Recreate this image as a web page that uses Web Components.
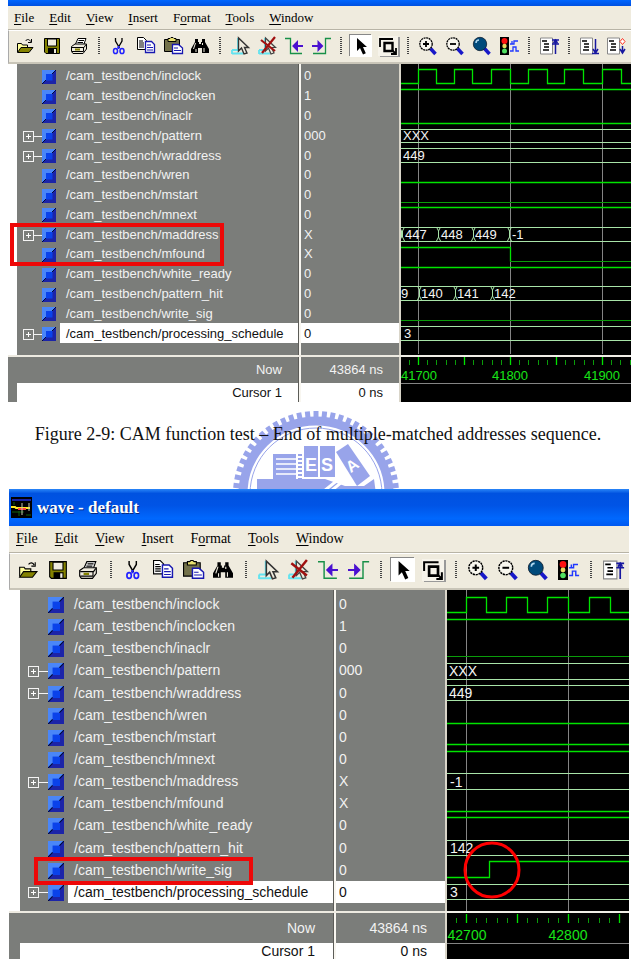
<!DOCTYPE html>
<html lang="en">
<head>
<meta charset="utf-8">
<title>CAM function test</title>
<style>
  body { margin: 0; background: #fff; font-family: "Liberation Sans", Arial, sans-serif; }
</style>
</head>
<body>
<cam-page></cam-page>
<script>
const ICONS = {
  open: '<path d="M1.5 15V6.500h4l1 1.500h5v3" fill="#ffff9c" stroke="#000"/><path d="M1.500 15.500 5 10.500h12l-4 5z" fill="#848200" stroke="#000"/><path d="M9.500 4c1.500-2 4-2 5 .5M15.500 2v3.500H12" fill="none" stroke="#000"/>',
  save: '<path d="M1.500 1.500h15v15H3l-1.500-1.500z" fill="#848200" stroke="#000"/><path d="M4.500 2h9v7h-9z" fill="#efebde" stroke="#000"/><path d="M5 11h9v6H5z"/><path d="M11 12h2v4h-2z" fill="#efebde"/>',
  print: '<path d="M5.500 7 8 1.500h8L14 7" fill="#fff" stroke="#000"/><path d="M8.500 3.500H14M7.500 5.500H13" stroke="#000"/><path d="M1.500 9.500 5 7h11.500v5L13 16.500H3l-1.500-2z" fill="#efebde" stroke="#000"/><path d="M2 10.500h12l2-3M2 14.500h11.500V11" fill="none" stroke="#000"/><path d="M5 12.500h5" stroke="#848200" stroke-width="2"/>',
  cut: '<path d="M5.500 1v3l4 7M12 1v3L8 11" fill="none" stroke="#000" stroke-width="1.300"/><path d="M8.500 9v3" stroke="#2020ff" stroke-width="2"/><g fill="none" stroke="#2020ff" stroke-width="1.500"><ellipse cx="5.500" cy="14" rx="2" ry="2.600"/><ellipse cx="12" cy="14" rx="2" ry="2.600"/></g>',
  copy: '<path d="M.5.5h6l3 3v9h-9z" fill="#fff" stroke="#000"/><path d="M2 4h4M2 6h5M2 8h5M2 10h5" stroke="#000"/><path d="M8.500 4.500h6l3 3v8h-9z" fill="#fff" stroke="#1818b0" stroke-width="1.300"/><path d="M10 8h4M10 10.500h6M10 13h6" stroke="#1818b0"/>',
  paste: '<path d="M.5 2.500h15v12H.5z" fill="#73714a" stroke="#000"/><path d="M4 1.500h2l1-1h2l1 1h2v3H4z" fill="#e8e070" stroke="#000"/><path d="M8.500 7.500h6l4 3.500v5.500h-10z" fill="#fff" stroke="#1818b0" stroke-width="1.300"/><path d="M10 11h4M10 13.500h7" stroke="#1818b0"/>',
  find: '<path d="M4 2h3v3h1v2h2V5h1V2h3v3l4 7v4h-7v-5H7v5H0v-4l4-7z"/><path d="M4.500 6 2.500 12M11.500 6v2M5 12v3M13 11v4" stroke="#efebde"/>',
  cursor: '<path d="M7 1v13M1 13h7M1 16.500h11M1 13v4" stroke="#63e3ef" stroke-width="1.800" fill="none"/><path d="M7.500 1v13l3-3 2.500 6 3-1-2.500-5.500h4z" fill="#efebde" stroke="#333" stroke-width="1.400"/>',
  uncursor: '<path d="M7 1v13M1 13h7M1 16.500h11M1 13v4" stroke="#63e3ef" stroke-width="1.800" fill="none"/><path d="M7.500 1v13l3-3 2.500 6 3-1-2.500-5.500h4z" fill="#efebde" stroke="#444" stroke-width="1.200"/><path d="M3 3 17 14M17 0 4 16" stroke="#a01010" stroke-width="2.200"/>',
  prevedge: '<path d="M0 1.500h5.500v15H17" fill="none" stroke="#189048" stroke-width="1.300"/><path d="M8 9h10M12 5.500 8.500 9l3.500 3.500z" fill="#4a10d0" stroke="#4a10d0" stroke-width="2"/>',
  nextedge: '<path d="M1 16.500h12.500v-15H19" fill="none" stroke="#189048" stroke-width="1.300"/><path d="M0 9h10M6.500 5.500 10 9l-3.500 3.500z" fill="#4a10d0" stroke="#4a10d0" stroke-width="2"/>',
  select: '<path d="M5 1v13l3-3 3 6.500 2.800-1.300L11 10h4z"/>',
  zoombox: '<path d="M1 10V2h13" fill="none" stroke="#000" stroke-width="1.800"/><path d="M5.500 6h8v8h-8z" fill="none" stroke="#000" stroke-width="2.400"/><path d="m13 13 4 4M17 11v6h-5" fill="none" stroke="#000" stroke-width="1.800"/>',
  zoomin: '<path d="m11 11 5.500 6" stroke="#1818c8" stroke-width="3.500"/><circle cx="7" cy="7" r="6.200" fill="#f8f6ee" stroke="#000" stroke-width="1.300" stroke-dasharray="2 .6"/><path d="M4 7h6M7 4v6" stroke="#000" stroke-width="1.800"/>',
  zoomout: '<path d="m11 11 5.500 6" stroke="#1818c8" stroke-width="3.500"/><circle cx="7" cy="7" r="6.200" fill="#f8f6ee" stroke="#000" stroke-width="1.300" stroke-dasharray="2 .6"/><path d="M4 7h6" stroke="#000" stroke-width="1.800"/>',
  zoomfull: '<path d="m11 11 5.500 6" stroke="#1818c8" stroke-width="3.500"/><circle cx="7" cy="7" r="6.700" fill="#004a7b" stroke="#102030" stroke-width=".8"/><path d="M3 6c0-2 1-3 3-3" stroke="#b0d8f0" stroke-width="1.500" fill="none"/>',
  traffic: '<path d="M0 0h9v18H0z"/><circle cx="4.500" cy="4" r="3" fill="#ff1010"/><circle cx="4.500" cy="9" r="2.200" fill="#e8d860"/><circle cx="4.500" cy="14" r="2.500" fill="#50e060"/><path d="M10 7h2V4h0M12 7h2V4h2M10 14h3v-4h3v4h3M14 7V4h4" fill="none" stroke="#2038ff" stroke-width="1.300"/>',
  docup: '<path d="M.5 1h12v16H.5z" fill="#fff" stroke="#888"/><path d="M2 4h5M4 7h5M4 10h5M3 13h6" stroke="#000" stroke-width="1.500"/><path d="M15.500 2v15M12 3h7M12 7h7M13.500 6l2-3 2 3" stroke="#1818a0" stroke-width="1.500" fill="none"/>',
  docdown: '<path d="M.5 1h12v16H.5z" fill="#fff" stroke="#888"/><path d="M2 4h5M4 7h5M4 10h5M3 13h6" stroke="#000" stroke-width="1.500"/><path d="M15.500 2v14M12 16.500h7M13 12l2.500 4 2.500-4" stroke="#1818a0" stroke-width="1.500" fill="none"/>',
  docmark: '<path d="M.5 1h12v16H.5z" fill="#fff" stroke="#888"/><path d="M2 4h5M4 7h5M4 10h5M3 13h6" stroke="#000" stroke-width="1.500"/><path d="M15.500 9v7M13 12l2.500 4 2.500-4" stroke="#1818a0" stroke-width="1.500" fill="none"/><path d="m15.500 1.500 2.500 3-2.500 3-2.500-3z" fill="#fff" stroke="#ff3020"/>'
};
const TOOLS = ['open','save','print','|','cut','copy','paste','find','|','cursor','uncursor','prevedge','nextedge','|','select','zoombox','|','zoomin','zoomout','zoomfull','traffic','|','docup','|','docdown','docmark'];
const SIGNALS = [['inclock','0'],['inclocken','1'],['inaclr','0'],['pattern','000',1],['wraddress','0',1],['wren','0'],['mstart','0'],['mnext','0'],['maddress','X',1],['mfound','X'],['white_ready','0'],['pattern_hit','0'],['write_sig','0'],['processing_schedule','0',1]];

class CamElement extends HTMLElement {
  constructor() { super(); this.attachShadow({ mode: 'open' }); }
  connectedCallback() { this.shadowRoot.innerHTML = this.render(); }
}

customElements.define('tool-icon', class extends CamElement {
  render() {
    return `<style>
      :host { display: block; width: var(--icon); height: var(--icon); }
      svg { display: block; width: 100%; height: 100%; overflow: visible; }
    </style><svg viewBox="0 0 18 18" aria-hidden="true">${ICONS[this.getAttribute('name')]}</svg>`;
  }
});

customElements.define('title-bar', class extends CamElement {
  render() {
    return `<style>
      :host { display: flex; align-items: center; gap: 5px; height: var(--title-h); padding-left: 2px; box-sizing: border-box;
        overflow: hidden; color: #fff; font: bold 17px "Liberation Serif", serif; text-shadow: 1px 1px #0a2a80;
        background: linear-gradient(#2a86f8 0, #0052e0 12%, #0054e6 45%, #0068fe 80%, #0058f0); }
      :host([plain]) { background: linear-gradient(#0066ff, #0050e0); }
      svg { flex: none; width: 21px; height: 21px; }
    </style>${this.hasAttribute('plain') ? '' : `<svg viewBox="0 0 21 21" aria-hidden="true"><path d="M0 0h21v21H0z"/><path d="M1 3h19" stroke="#1820a0" stroke-width="2"/><path d="M1 15h12M15 18h5M3 5v3M8 14v5" stroke="#106010"/><path d="M0 10h4l1 1h14" stroke="#ffe820" stroke-width="2" fill="none"/><path d="M7 12h8" stroke="#ff4040" stroke-width="2"/><path d="M11 6v12M18 6v8" stroke="#c8c8b0"/></svg>`}<slot></slot>`;
  }
});

customElements.define('menu-bar', class extends CamElement {
  render() {
    const items = [['','F','ile'],['','E','dit'],['','V','iew'],['','I','nsert'],['F','o','rmat'],['','T','ools'],['','W','indow']];
    return `<style>
      :host { display: flex; align-items: center; gap: var(--menu-gap); height: var(--menu-h); box-sizing: border-box; padding-left: var(--menu-pad);
        background: #efebde; border-bottom: 1px solid #b8b4a6; }
      button { all: unset; font: var(--menu-font) "Liberation Serif", serif; color: #000; }
      u { text-underline-offset: 2px; }
    </style>${items.map(([a, k, b]) => `<button type="button">${a}<u>${k}</u>${b}</button>`).join('')}`;
  }
});

customElements.define('tool-bar', class extends CamElement {
  render() {
    const list = TOOLS.slice(0, +this.getAttribute('count'));
    return `<style>
      :host { display: flex; align-items: center; height: var(--tool-h); box-sizing: border-box; padding: 0 0 2px var(--tool-pad);
        background: #efebde; border-top: 1px solid #fff; border-bottom: 2px solid #c9c5b8; border-left: 1px solid #aaa; overflow: hidden; }
      button { all: unset; flex: none; display: grid; place-items: center; width: var(--slot); height: 24px; }
      button.select tool-icon { background: #fff; box-shadow: 0 0 0 2px #fff, -1px -1px 0 2px #888; }
      button.zoombox tool-icon { background: #f6f3ea; box-shadow: 0 0 0 1px #f6f3ea, 2px 1px 0 1px #999; }
      i { flex: none; width: var(--sep); height: 18px; background: repeating-linear-gradient(#444 0 1px, transparent 1px 2px) center / 2px 100% no-repeat; }
    </style>${list.map(n => n === '|' ? '<i></i>' : `<button type="button" class="${n}" aria-label="${n}"><tool-icon name="${n}"></tool-icon></button>`).join('')}`;
  }
});

customElements.define('signal-table', class extends CamElement {
  render() {
    const rows = SIGNALS.map(([n, v, bus], i) => `<tr class="${i === 13 ? 'sel' : ''}"><td class="name">${bus ? `<button type="button" aria-label="Expand ${n}"></button><b></b>` : ''}<svg viewBox="0 0 14 14" aria-hidden="true"><path d="M0 0h14v14H0z" fill="#4a86f8"/><path d="M14 0v14H0l4-4h6V4z" fill="#1c24a8"/><path d="M4 4h6.500v6.500H4z" fill="#0a42ea"/><path d="m0 14 4-4M10 4l4-4" stroke="#000838"/></svg><span>/cam_testbench/${n}</span></td><td class="val">${v}</td></tr>`).join('');
    return `<style>
      :host { display: block; font-size: var(--text); color: #f2f2f2;
        --g: #7b7d7a; }
      table, tbody, tfoot { display: grid; }
      table { background: linear-gradient(to left, #d9d5c9 0 2px, var(--g) 2px var(--v1), #f8f6f0 var(--v1) var(--v2), #5c5c58 var(--v2) var(--v3), var(--g) var(--v3)); }
      tbody { border-left: var(--strip) solid #fff; padding: var(--top) 0 var(--bottom); height: var(--rows); grid-template-rows: repeat(14, minmax(0, 1fr)); }
      tfoot { border-left: var(--strip) solid var(--g); }
      tr { display: grid; grid-template-columns: minmax(0, 1fr) var(--val); column-gap: 3px; padding-right: 2px; }
      td { padding: 0; }
      .name { display: flex; align-items: center; justify-content: flex-end; }
      span { box-sizing: border-box; width: var(--label); flex: none; align-self: stretch; display: flex; align-items: center; padding-left: 6px; margin-left: 4px; white-space: nowrap; }
      svg { flex: none; width: var(--sq); height: var(--sq); margin-top: 2px; }
      button { all: unset; flex: none; box-sizing: border-box; width: 11px; height: 11px; margin-top: 2px; border: 1px solid #f4f4f4;
        background: linear-gradient(#fff, #fff) center / 5px 1px no-repeat, linear-gradient(#fff, #fff) center / 1px 5px no-repeat; }
      b { flex: none; width: var(--stem); height: 1px; margin-top: 2px; background: #f4f4f4; }
      .val { display: flex; align-items: center; padding-left: 3px; }
      .sel span, .sel .val, .cur td { background: #fff; color: #111; }
      tfoot::before { content: ""; height: 2px; margin-left: calc(0px - var(--strip)); background: #eeebe2; }
      tfoot td { text-align: right; padding-right: var(--foot-pad); }
      .now { height: var(--now); line-height: var(--now); }
      .cur { height: var(--cur); line-height: var(--cur); }
    </style><table><tbody>${rows}</tbody><tfoot><tr class="now"><td>Now</td><td>43864 ns</td></tr><tr class="cur"><td>Cursor 1</td><td>0 ns</td></tr></tfoot></table>`;
  }
});

const line = (y, c) => `<path d="M0 ${y}.5H2000" class="${c}"/>`;
const ticks = (x0, step, y, tall) => {
  let d = '', m = '';
  for (let k = -1; k < 60; k++) {
    const x = Math.round(x0 + k * step);
    if (k % 5 === 0) m += `M${x}.5 ${tall}V${y}`; else d += `M${x}.5 ${y - 5}V${y}`;
  }
  return `<path class="g" d="${m}"/><path class="d" d="${d}"/>`;
};
const swap = (x, y) => `<path d="M${x - 1}.5 ${y}l2 4v6l-2 4M${x + 3}.5 ${y}l-2 4v6l2 4" class="p"/>`;
const WAVES = {
  end: () => `
    <path class="v" d="M17.500 0V290M109.500 0V290M201.500 0V290"/>
    <path class="g" d="M0 19.500H17.500V5.500H35.500V19.500H53.500V5.500H71.500V19.500H90.500V5.500H109.500V19.500H127.500V5.500H146.500V19.500H163.500V5.500H182.500V19.500H201.500V5.500H220.500V19.500H2000"/>
    ${line(25,'g')}${line(59,'g')}${line(65,'p')}${line(78,'p')}${line(84,'p')}${line(98,'p')}${line(118,'g')}${line(138,'d')}${line(143,'g')}
    ${line(163,'p')}${line(177,'p')}<path class="g" d="M0 183.500H109.500V197.500"/><path class="d" d="M109 197.500H2000"/>${line(203,'g')}${line(222,'p')}${line(236,'p')}${line(256,'d')}${line(262,'p')}${line(276,'p')}
    ${swap(0,163)}${swap(36,163)}${swap(71,163)}${swap(107,163)}${swap(17,222)}${swap(53,222)}${swap(90,222)}
    <g class="t"><text x="2" y="76">XXX</text><text x="2" y="96">449</text><text x="4" y="175">447</text><text x="40" y="175">448</text><text x="74" y="175">449</text><text x="111" y="175">-1</text>
    <text x="0" y="234">9</text><text x="20" y="234">140</text><text x="56" y="234">141</text><text x="93" y="234">142</text><text x="3" y="274">3</text></g>
    <path d="M0 292H2000" stroke="#f0ede6" stroke-width="2"/>${ticks(17,9.2,301,293)}
    <g class="l"><text x="18" y="316">41700</text><text x="109" y="316">41800</text><text x="201" y="316">41900</text></g>
    <path class="v" d="M0 319.500H2000"/>`,
  write: () => `
    <path class="v" d="M19.500 0V321M121.500 0V321"/>
    <path class="g" d="M0 22.500H19.500V7.500H39.500V22.500H59.500V7.500H80.500V22.500H100.500V7.500H121.500V22.500H142.500V7.500H163.500V22.500H2000"/>
    ${line(29,'g')}${line(66,'d')}${line(73,'p')}${line(89,'p')}${line(95,'p')}${line(110,'p')}${line(133,'g')}${line(154,'g')}${line(161,'g')}
    ${line(183,'p')}${line(199,'p')}${line(221,'g')}${line(227,'g')}${line(250,'p')}${line(265,'p')}<path class="g" d="M0 287.500H42.500V271.500H2000"/>${line(294,'p')}${line(309,'p')}
    <g class="t"><text x="2" y="86">XXX</text><text x="2" y="108">449</text><text x="3" y="197">-1</text><text x="3" y="263">142</text><text x="3" y="307">3</text></g>
    <path d="M0 322H2000" stroke="#f0ede6" stroke-width="2"/>${ticks(19,10.2,333,324)}
    <g class="l"><text x="20" y="350">42700</text><text x="121" y="350">42800</text></g>
    <path class="v" d="M0 353.500H2000"/>
    <circle cx="45" cy="280" r="27" fill="none" stroke="#f00" stroke-width="3"/>`
};
customElements.define('wave-view', class extends CamElement {
  render() {
    return `<style>
      :host { display: block; position: relative; background: #000; overflow: hidden; font-size: var(--text); }
      svg { position: absolute; width: 100%; height: 100%; }
      path { fill: none; }
      .g { stroke: #00e400; stroke-width: 1.3px; } .d { stroke: #0a9c0a; } .p { stroke: #a8e4a8; } .v { stroke: #848484; }
      .t { fill: #f4f4f4; } .l { fill: #18e418; text-anchor: middle; }
    </style><svg role="img" aria-label="Waveforms">${WAVES[this.getAttribute('trace')]()}</svg>`;
  }
});

customElements.define('wave-window', class extends CamElement {
  render() {
    const big = this.hasAttribute('big');
    return `<style>
      :host { display: block; position: relative; margin: 0 2px 0 8px;
        --title-h: 6px; --menu-h: 24px; --menu-pad: 6px; --menu-gap: 15px; --menu-font: 13px; --tool-h: 34px; --tool-pad: 2px; --slot: 27px; --sep: 13px; --icon: 18px;
        --text: 13px; --strip: 9px; --top: 2px; --bottom: 12px; --rows: 277px; --val: 98px; --v1: 100px; --v2: 102px; --v3: 103px;
        --label: 238px; --sq: 14px; --stem: 8px; --now: 26px; --cur: 19px; --foot-pad: 16px; --table: 393px; }
      :host([big]) { margin: 0 4px 0 9px;
        --title-h: 37px; --menu-h: 27px; --menu-pad: 7px; --menu-gap: 17px; --menu-font: 14px; --tool-h: 37px; --tool-pad: 3px; --slot: 30px; --sep: 15px; --icon: 20px;
        --text: 14px; --strip: 11px; --top: 3px; --bottom: 8px; --rows: 310px; --val: 109px; --v1: 111px; --v2: 113px; --v3: 114px;
        --label: 265px; --sq: 16px; --stem: 9px; --now: 30px; --cur: 16px; --foot-pad: 18px; --table: 438px; }
      .body { display: grid; grid-template-columns: var(--table) minmax(0, 1fr); }
      ::slotted(mark) { position: absolute; box-sizing: border-box; background: none; border: 4px solid #ee0808; }
    </style>
    <title-bar ${big ? '' : 'plain'}>${this.getAttribute('caption') || ''}</title-bar>
    <menu-bar></menu-bar><tool-bar count="${big ? 23 : 26}"></tool-bar>
    <div class="body"><signal-table></signal-table><wave-view trace="${this.getAttribute('trace')}"></wave-view></div><slot></slot>`;
  }
});

customElements.define('figure-caption', class extends CamElement {
  render() {
    let teeth = '';
    for (let a = -90; a <= 90; a += 6) teeth += `<path d="M-2.500 -83h5v9h-5z" transform="rotate(${a})"/>`;
    return `<style>
      :host { display: block; position: relative; height: 87px; overflow: hidden; text-align: center; padding-top: 20px; box-sizing: border-box;
        font: 18px/24px "Liberation Serif", serif; color: #111; }
      svg { position: absolute; left: 50%; top: 0; width: 180px; height: 87px; margin-left: -91px; }
      p { position: relative; margin: 0; padding-left: 3px; white-space: nowrap; }
    </style>
    <svg viewBox="-90 -92 180 87" aria-hidden="true"><g fill="#98a4ea">${teeth}<circle r="73" fill="none" stroke="#98a4ea" stroke-width="9"/>
      <circle r="66" fill="none" stroke="#98a4ea"/>
      <path d="M-43 -40h23v26h-23zM-12 -48h14v31h-14zM4 -48h15v31H4zM-59 -15H9L29 -8 48 -8 58 -15 60 0H-59z"/>
      <path d="m20 -42 12 -8 22 32 -13 10z"/></g>
      <path d="M-40 -35h20M-40 -30h20M-40 -25h20M-40 -20h20" stroke="#fff" stroke-width="1.500"/>
      <path d="M-16 -40v25" stroke="#98a4ea" stroke-width="4" stroke-dasharray="2 2"/>
      <path d="m8 -3 20-16M15 -3l17-14" stroke="#fff" stroke-width="3"/>
      <g fill="#fff" font-family="Liberation Sans, sans-serif" font-weight="bold" font-size="18" text-anchor="middle"><text x="-5" y="-23">E</text><text x="11" y="-23">S</text><text x="0" y="6" font-size="16" transform="translate(36 -29) rotate(-36)">A</text></g>
    </svg><p><slot></slot></p>`;
  }
});

customElements.define('cam-page', class extends CamElement {
  render() {
    return `<style>
      :host { display: block; overflow: hidden; }
      .found { left: 2px; top: 223px; width: 214px; height: 43px; }
      .write { left: 25px; top: 368px; width: 219px; height: 28px; }
    </style>
    <wave-window trace="end"><mark class="found"></mark></wave-window>
    <figure-caption>Figure 2-9: CAM function test – End of multiple-matched addresses sequence.</figure-caption>
    <wave-window big trace="write" caption="wave - default"><mark class="write"></mark></wave-window>`;
  }
});
</script>
</body>
</html>
